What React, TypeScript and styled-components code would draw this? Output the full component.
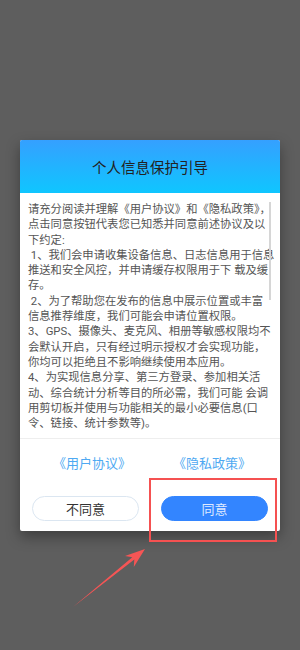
import React from "react";
import styled, { createGlobalStyle } from "styled-components";

const GlobalStyle = createGlobalStyle`
  html, body {
    margin: 0;
    padding: 0;
    background: #5e5e5e;
  }
  body {
    font-family: Roboto, "Noto Sans CJK SC", sans-serif;
  }
`;

const Screen = styled.div`
  position: relative;
  width: 300px;
  height: 650px;
  padding-top: 140px;
  box-sizing: border-box;
  overflow: hidden;
`;

const Dialog = styled.div`
  width: 260px;
  margin-left: 20px;
  background: #ffffff;
  border-radius: 2px;
  overflow: hidden;
  box-shadow: 0 6px 14px rgba(0, 0, 0, 0.35);
`;

const Header = styled.div`
  height: 53px;
  display: flex;
  align-items: center;
  justify-content: center;
  background: linear-gradient(180deg, #35a0ff 0%, #0fc6ff 100%);
  color: #222;
  font-size: 14.5px;
`;

const Body = styled.div`
  position: relative;
  height: 246px;
  box-sizing: border-box;
  padding: 9px 0 0 8px;
  border-bottom: 1px solid #eeeeee;
  overflow: hidden;
`;

const Line = styled.div`
  white-space: pre;
  font-size: 11.3px;
  line-height: 15.3px;
  color: #555;
`;

const Thumb = styled.div`
  position: absolute;
  right: 9px;
  top: 9px;
  width: 2px;
  height: 98px;
  background: #d6d6d6;
`;

const Links = styled.div`
  display: flex;
  height: 46px;
  align-items: center;
  padding: 0 8px 0 12px;
`;

const Link = styled.a`
  flex: 1;
  text-align: center;
  color: #4ea9f2;
  font-size: 13px;
  text-decoration: none;
`;

const Actions = styled.div`
  display: flex;
  gap: 22px;
  padding: 11px 12px 10px;
`;

const Button = styled.button<{ $primary?: boolean }>`
  flex: 1;
  height: 25px;
  border-radius: 13px;
  font-family: inherit;
  font-size: 13px;
  border: 1px solid ${(p) => (p.$primary ? "#3385ff" : "#dbe6f1")};
  background: ${(p) => (p.$primary ? "#3385ff" : "#ffffff")};
  color: ${(p) => (p.$primary ? "#dfeaff" : "#333")};
  padding: 0;
`;

const Highlight = styled.div`
  position: absolute;
  left: 149px;
  top: 478px;
  width: 128px;
  height: 64px;
  box-sizing: border-box;
  border: 2px solid #f55151;
`;

const Arrow = styled.svg`
  position: absolute;
  left: 60px;
  top: 540px;
`;

const lines = [
  "请充分阅读并理解《用户协议》和《隐私政策》，",
  "点击同意按钮代表您已知悉并同意前述协议及以",
  "下约定:",
  " 1、我们会申请收集设备信息、日志信息用于信息",
  "推送和安全风控，并申请缓存权限用于下 载及缓",
  "存。",
  " 2、为了帮助您在发布的信息中展示位置或丰富",
  "信息推荐维度，我们可能会申请位置权限。",
  "3、GPS、摄像头、麦克风、相册等敏感权限均不",
  "会默认开启，只有经过明示授权才会实现功能，",
  "你均可以拒绝且不影响继续使用本应用。",
  "4、为实现信息分享、第三方登录、参加相关活",
  "动、综合统计分析等目的所必需，我们可能 会调",
  "用剪切板并使用与功能相关的最小必要信息(口",
  "令、链接、统计参数等)。",
];

const App = () => {
  return (
    <Screen>
      <GlobalStyle />
      <Dialog>
        <Header>个人信息保护引导</Header>
        <Body>
          {lines.map((l, i) => (
            <Line key={i}>{l}</Line>
          ))}
          <Thumb />
        </Body>
        <Links>
          <Link>《用户协议》</Link>
          <Link>《隐私政策》</Link>
        </Links>
        <Actions>
          <Button>不同意</Button>
          <Button $primary>同意</Button>
        </Actions>
      </Dialog>
      <Highlight />
      <Arrow width="100" height="80" viewBox="0 0 100 80">
        <polygon
          points="13,67 74.3,19.6 73.8,27.1 85,9 65,16.1 72.3,17.2"
          fill="#f55555"
        />
      </Arrow>
    </Screen>
  );
};

export default App;
